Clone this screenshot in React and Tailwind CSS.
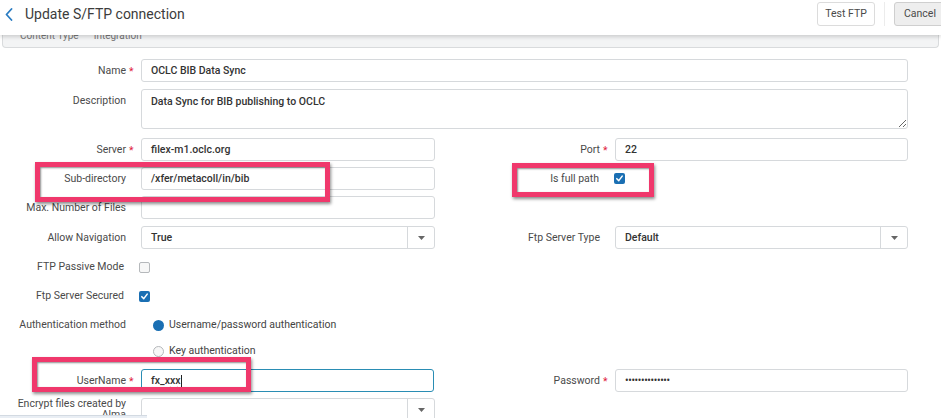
import React from "react";

const Star = () => (
  <span className="absolute left-full top-0 ml-[3px] text-[#e0203a]">*</span>
);

function Label({ children, star, width = "w-[141px]", className = "" }) {
  return (
    <div className={`${width} shrink-0 pr-[15px] text-right text-[10.5px] text-[#4a4a4a] ${className}`}>
      <span className="relative">
        {children}
        {star && <Star />}
      </span>
    </div>
  );
}

function Input({ value, width = "w-[294px]", className = "" }) {
  return (
    <div
      className={`${width} h-[23px] shrink-0 flex items-center pl-[9px] border border-[#d6d9dc] rounded-[3px] bg-white text-[10.5px] font-medium text-[#333] ${className}`}
    >
      {value}
    </div>
  );
}

function Select({ value, width = "w-[294px]" }) {
  return (
    <div className={`${width} h-[23px] shrink-0 flex items-stretch border border-[#d6d9dc] rounded-[3px] bg-white`}>
      <div className="flex-1 flex items-center pl-[9px] text-[10.5px] font-medium text-[#333]">{value}</div>
      <div className="w-[27px] border-l border-[#d6d9dc] flex items-center justify-center">
        <svg width="7" height="4" viewBox="0 0 7 4">
          <path d="M0 0 L7 0 L3.5 4 Z" fill="#666" />
        </svg>
      </div>
    </div>
  );
}

function Checkbox({ checked }) {
  return checked ? (
    <div className="w-[11px] h-[11px] rounded-[2px] bg-[#1a6fb3] flex items-center justify-center">
      <svg width="9" height="9" viewBox="0 0 10 10">
        <path d="M2 5.2 L4.2 7.4 L8 2.4" stroke="#fff" strokeWidth="1.7" fill="none" strokeLinecap="round" strokeLinejoin="round" />
      </svg>
    </div>
  ) : (
    <div className="w-[11px] h-[11px] rounded-[2px] border border-[#b5b8bb] bg-[#f7f7f7]" />
  );
}

const RedBox = ({ className }) => (
  <div
    className={`absolute z-20 border-[5px] border-[#f0386c] shadow-[1px_2px_3px_rgba(0,0,0,0.45),inset_1px_1px_2px_rgba(0,0,0,0.45)] ${className}`}
  />
);

export default function App() {
  return (
    <div className="relative w-[941px] h-[418px] overflow-hidden bg-white font-['Roboto','Liberation_Sans',sans-serif]">
      {/* Header */}
      <div className="relative z-10 h-[35px] bg-white flex items-start pt-[2px] shadow-[0_2px_4px_rgba(0,0,0,0.16)]">
        <div className="h-[24px] flex items-center pl-[5px]">
          <svg width="8" height="13" viewBox="0 0 8 13">
            <path d="M6.5 1 L1.5 6.5 L6.5 12" stroke="#2a7cc2" strokeWidth="1.8" fill="none" strokeLinecap="round" strokeLinejoin="round" />
          </svg>
        </div>
        <div className="h-[24px] flex items-center ml-[12px] text-[14px] text-[#3c3c3c]">Update S/FTP connection</div>
        <div className="ml-auto flex items-center">
          <div className="h-[24px] w-[58px] flex items-center justify-center border border-[#dcdcdc] rounded-[3px] bg-white text-[10.5px] text-[#4a4a4a]">
            Test FTP
          </div>
          <div className="w-px h-[24px] bg-[#ececec] mx-[9px]" />
          <div className="h-[24px] w-[50px] -mr-[3px] flex items-center pl-[9px] border border-[#cfcfcf] rounded-[3px] bg-[#eeeeee] text-[10.5px] text-[#4a4a4a]">
            Cancel
          </div>
        </div>
      </div>

      {/* Partially hidden info panel */}
      <div className="mx-[2px] h-[13px] bg-[#f3f4f5] border border-t-0 border-[#d9dbdd] rounded-b-[4px] overflow-hidden">
        <div className="-mt-[7px] pl-[17px] flex gap-[15px] text-[10px] text-[#777]">
          <span>Content Type</span>
          <span>Integration</span>
        </div>
      </div>

      {/* Form */}
      <div className="pt-[11px] flex flex-col">
        <div className="flex items-center">
          <Label star>Name</Label>
          <Input value="OCLC BIB Data Sync" width="w-[767px]" />
        </div>

        <div className="flex items-start mt-[7px]">
          <Label className="pt-[4px]">Description</Label>
          <textarea
            readOnly
            value="Data Sync for BIB publishing to OCLC"
            className="w-[767px] h-[40px] shrink-0 pl-[9px] pt-[4px] border border-[#d6d9dc] rounded-[3px] bg-white text-[10.5px] font-medium text-[#333] outline-none"
          />
        </div>

        <div className="flex items-center mt-[9px]">
          <Label star>Server</Label>
          <Input value="filex-m1.oclc.org" />
          <Label star width="w-[180px]">Port</Label>
          <Input value="22" width="w-[293px]" />
        </div>

        <div className="flex items-center mt-[6px]">
          <Label>Sub-directory</Label>
          <Input value="/xfer/metacoll/in/bib" />
          <Label width="w-[179px]">Is full path</Label>
          <Checkbox checked />
        </div>

        <div className="flex items-center mt-[6px]">
          <Label>Max. Number of Files</Label>
          <Input value="" />
        </div>

        <div className="flex items-center mt-[7px]">
          <Label>Allow Navigation</Label>
          <Select value="True" />
          <Label width="w-[180px]">Ftp Server Type</Label>
          <Select value="Default" width="w-[293px]" />
        </div>

        <div className="flex items-center h-[20px] mt-[8px]">
          <Label width="w-[139px]" className="pr-[13px]">FTP Passive Mode</Label>
          <Checkbox />
        </div>

        <div className="flex items-center h-[20px] mt-[9px]">
          <Label width="w-[139px]" className="pr-[13px]">Ftp Server Secured</Label>
          <Checkbox checked />
        </div>

        <div className="flex items-center h-[20px] mt-[9px]">
          <Label>Authentication method</Label>
          <div className="ml-[12px] w-[11px] h-[11px] rounded-full bg-[#1a6fb3]" />
          <span className="ml-[5px] text-[10.5px] text-[#444]">Username/password authentication</span>
        </div>

        <div className="flex items-center h-[20px] mt-[6px]">
          <div className="w-[141px] shrink-0" />
          <div className="ml-[12px] w-[11px] h-[11px] rounded-full border border-[#b5b8bb] bg-[#f7f7f7]" />
          <span className="ml-[5px] text-[10.5px] text-[#444]">Key authentication</span>
        </div>

        <div className="flex items-center mt-[8px]">
          <Label star>UserName</Label>
          <div className="w-[293px] h-[23px] shrink-0 flex items-center pl-[9px] border-[1.5px] border-[#2a8db4] rounded-[3px] bg-white text-[10.5px] font-medium text-[#333]">
            <span>fx_</span>
            <span className="underline decoration-wavy decoration-[#e04040] decoration-[0.5px] underline-offset-[2px]">xxx</span>
            <span className="w-px h-[12px] bg-[#222]" />
          </div>
          <Label star width="w-[181px]">Password</Label>
          <Input value={<span className="text-[10px] tracking-[-0.3px] text-[#333]">••••••••••••••</span>} width="w-[293px]" />
        </div>

        <div className="flex items-start mt-[6px]">
          <div className="w-[141px] shrink-0 pr-[15px] text-right text-[10.5px] leading-[11px] text-[#4a4a4a]">
            Encrypt files created by
            <br />
            Alma
          </div>
          <Select value="" />
        </div>
      </div>

      {/* Bottom-left sliver */}
      <div className="absolute left-0 bottom-0 w-[147px] h-[3px] bg-[#e9eef4] border-t border-[#d3dae2]" />

      {/* Highlight boxes */}
      <RedBox className="left-[35px] top-[162px] w-[295px] h-[40px]" />
      <RedBox className="left-[512px] top-[163px] w-[142px] h-[34px]" />
      <RedBox className="left-[32px] top-[357px] w-[219px] h-[35px]" />
    </div>
  );
}
